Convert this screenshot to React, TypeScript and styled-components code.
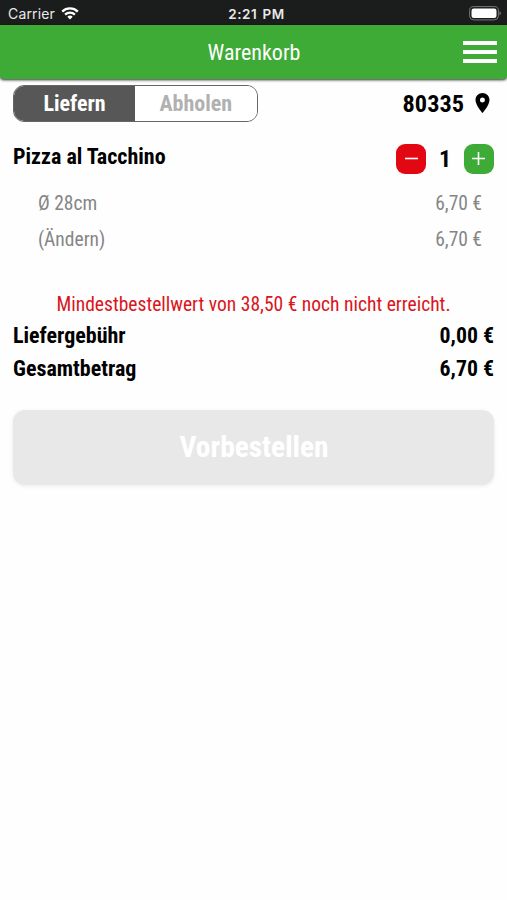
import React from "react";
import styled, { createGlobalStyle } from "styled-components";

const Global = createGlobalStyle`
  * { box-sizing: border-box; }
  body { margin: 0; background: #fefefe; }
`;

const Screen = styled.div`
  width: 507px;
  height: 900px;
  overflow: hidden;
  display: flex;
  flex-direction: column;
  font-family: "Roboto Condensed", Roboto, sans-serif;
  font-stretch: 75%;
  color: #000;
`;

const StatusBar = styled.div`
  height: 25px;
  flex: none;
  background: #1b1d1c;
  color: #e9e9e9;
  display: grid;
  grid-template-columns: 1fr auto 1fr;
  align-items: center;
  padding: 2px 6px 0 8px;
  font-family: Inter, sans-serif;
  font-stretch: 100%;
  font-size: 14px;
  line-height: 20px;
`;

const Carrier = styled.div`
  display: flex;
  align-items: center;
  gap: 6px;
  letter-spacing: 0.15px;
`;

const Clock = styled.div`
  font-size: 13.5px;
  font-weight: 600;
  letter-spacing: 0.6px;
  word-spacing: 1px;
  padding-left: 4px;
`;

const BatterySlot = styled.div`
  display: flex;
  justify-content: flex-end;
`;

const Header = styled.header`
  height: 54px;
  flex: none;
  background: #3dab35;
  color: #fff;
  display: grid;
  grid-template-columns: 1fr auto 1fr;
  align-items: center;
  padding: 0 10px;
  border-radius: 0 0 4px 4px;
  box-shadow: 0 1px 3px rgba(0, 0, 0, 0.85);
`;

const Title = styled.h1`
  grid-column: 2;
  margin: 0;
  padding-left: 1px;
  font-size: 22px;
  font-weight: 400;
`;

const MenuButton = styled.div`
  justify-self: end;
  width: 34px;
  height: 22px;
  display: flex;
  flex-direction: column;
  justify-content: space-between;
`;

const MenuLine = styled.span`
  height: 4px;
  background: #fff;
`;

const Content = styled.main`
  padding: 6px 13px 0;
`;

const Row = styled.div<{ $h: number; $inset?: boolean }>`
  height: ${(p) => p.$h}px;
  display: flex;
  align-items: center;
  justify-content: space-between;
  padding: ${(p) => (p.$inset ? "0 12px 0 25px" : "0")};
`;

const ItemRow = styled(Row)`
  margin: 5px 0 1px;
`;

const Text = styled.span<{ $size: number; $bold?: boolean; $color?: string }>`
  font-size: ${(p) => p.$size}px;
  font-weight: ${(p) => (p.$bold ? 700 : 400)};
  color: ${(p) => p.$color ?? "inherit"};
  white-space: nowrap;
`;

const Toggle = styled.div`
  width: 244.5px;
  height: 37px;
  display: flex;
  border: 1px solid #666;
  border-radius: 11px;
  overflow: hidden;
`;

const Option = styled.div<{ $active?: boolean }>`
  width: ${(p) => (p.$active ? "121px" : "auto")};
  flex: ${(p) => (p.$active ? "none" : "1")};
  display: flex;
  align-items: center;
  justify-content: center;
  font-size: 22px;
  font-weight: 700;
  background: ${(p) => (p.$active ? "#575757" : "#fff")};
  color: ${(p) => (p.$active ? "#fff" : "#b1b1b1")};
`;

const Location = styled.div`
  display: flex;
  align-items: center;
  gap: 11px;
  padding-right: 4px;
`;

const Pin = styled.svg`
  margin-bottom: 2px;
`;

const Stepper = styled.div`
  display: flex;
  align-items: center;
  justify-content: space-between;
  width: 98px;
  padding-top: 5px;
`;

const StepButton = styled.div<{ $color: string }>`
  width: 30px;
  height: 30px;
  border-radius: 9px;
  background: ${(p) => p.$color};
  display: grid;
  place-items: center;
`;

const Notice = styled.div`
  margin-top: 33px;
  height: 29px;
  display: flex;
  align-items: center;
  justify-content: center;
`;

const Submit = styled.div`
  margin-top: 25px;
  height: 75px;
  display: flex;
  align-items: center;
  justify-content: center;
  border-radius: 12px;
  background: #e8e8e8;
  box-shadow: 0 1px 4px rgba(0, 0, 0, 0.08);
  padding: 0 0 2px 1px;
`;

export default function App() {
  return (
    <Screen>
      <Global />
      <StatusBar>
        <Carrier>
          <span>Carrier</span>
          <svg width="18" height="13" viewBox="0 0 18 13" fill="none" stroke="#fff" strokeWidth="2.3">
            <path d="M1.2 4.6a11.2 11.2 0 0 1 15.6 0M4.1 7.6a7 7 0 0 1 9.8 0" />
            <path d="M6.3 9.7a4 4 0 0 1 5.4 0L9 12.5z" fill="#fff" stroke="none" />
          </svg>
        </Carrier>
        <Clock>2:21 PM</Clock>
        <BatterySlot>
          <svg width="32" height="15" viewBox="0 0 32 15">
            <rect x="0.6" y="0.6" width="28.8" height="13.3" rx="4" fill="none" stroke="#777" />
            <rect x="2.5" y="2.5" width="25" height="9.5" rx="2.2" fill="#fff" />
            <path d="M30.5 5v4.5q1.4-.7 1.4-2.2T30.500 5z" fill="#777" />
          </svg>
        </BatterySlot>
      </StatusBar>
      <Header>
        <Title>Warenkorb</Title>
        <MenuButton>
          <MenuLine />
          <MenuLine />
          <MenuLine />
        </MenuButton>
      </Header>
      <Content>
        <Row $h={37}>
          <Toggle>
            <Option $active>Liefern</Option>
            <Option>Abholen</Option>
          </Toggle>
          <Location>
            <Text $size={24.3} $bold>80335</Text>
            <Pin width="15" height="20" viewBox="5 2 14 20">
              <path d="M12 2C8.100 2 5 5.100 5 9c0 5.200 7 13 7 13s7-7.800 7-13c0-3.900-3.100-7-7-7zm0 9.500a2.500 2.500 0 1 1 0-5 2.500 2.500 0 0 1 0 5z" />
            </Pin>
          </Location>
        </Row>
        <ItemRow $h={58}>
          <Text $size={22} $bold>Pizza al Tacchino</Text>
          <Stepper>
            <StepButton $color="#e30613">
              <svg width="15" height="15" stroke="#fff" strokeWidth="1.6">
                <path d="M1 7.500h13" />
              </svg>
            </StepButton>
            <Text $size={24} $bold>1</Text>
            <StepButton $color="#3dab35">
              <svg width="15" height="15" stroke="#fff" strokeWidth="1.6">
                <path d="M1 7.500h13M7.500 1v13" />
              </svg>
            </StepButton>
          </Stepper>
        </ItemRow>
        <Row $h={35} $inset>
          <Text $size={19.5} $color="#858585">Ø 28cm</Text>
          <Text $size={19.5} $color="#858585">6,70 €</Text>
        </Row>
        <Row $h={36} $inset>
          <Text $size={19.5} $color="#858585">(Ändern)</Text>
          <Text $size={19.5} $color="#858585">6,70 €</Text>
        </Row>
        <Notice>
          <Text $size={19.55} $color="#d9151b">Mindestbestellwert von 38,50 € noch nicht erreicht.</Text>
        </Notice>
        <Row $h={33}>
          <Text $size={22} $bold>Liefergebühr</Text>
          <Text $size={21.8} $bold>0,00 €</Text>
        </Row>
        <Row $h={33}>
          <Text $size={22} $bold>Gesamtbetrag</Text>
          <Text $size={21.8} $bold>6,70 €</Text>
        </Row>
        <Submit>
          <Text $size={29.4} $bold $color="#fff">Vorbestellen</Text>
        </Submit>
      </Content>
    </Screen>
  );
}
